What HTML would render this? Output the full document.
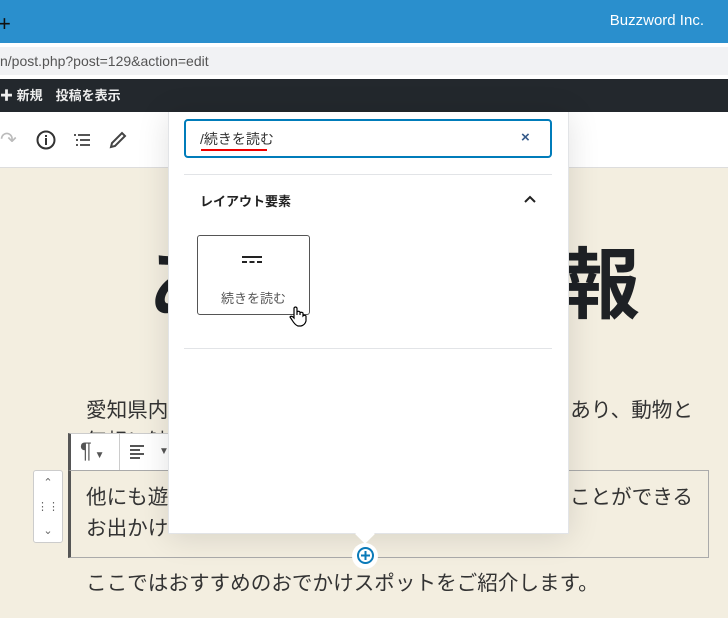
<!DOCTYPE html>
<html><head><meta charset="utf-8"><style>
*{margin:0;padding:0;box-sizing:border-box}
body{width:728px;height:618px;overflow:hidden;position:relative;background:#f3eee0;font-family:"Liberation Sans","Noto Sans CJK JP",sans-serif;color:#333}
.a{position:absolute}
.t{font-size:20.6px;line-height:31px;white-space:nowrap}
</style></head><body>
<div class="a" style="left:0;top:0;width:728px;height:43px;background:#2a8fcd"></div>
<div class="a" style="left:-2px;top:13px;color:#111;font-size:22px;line-height:22px">+</div>
<div class="a" style="right:24px;top:12px;color:#fff;font-size:15px">Buzzword Inc.</div>
<div class="a" style="left:0;top:43px;width:728px;height:4px;background:#fff"></div>
<div class="a" style="left:0;top:47px;width:728px;height:28px;background:#f1f2f4;font-size:14px;color:#555;line-height:28px;padding-left:0">n/post.php?post=129&amp;action=edit</div>
<div class="a" style="left:0;top:75px;width:728px;height:4px;background:#fff"></div>
<div class="a" style="left:0;top:79px;width:728px;height:33px;background:#23282d;color:#eee;font-size:13px;line-height:33px;font-weight:bold">✚ 新規　投稿を表示</div>
<div class="a" style="left:0;top:112px;width:728px;height:56px;background:#fff;border-bottom:1px solid #ddd"></div>
<div class="a" style="left:0;top:127px;color:#bbb;font-size:20px">↷</div>
<svg class="a" style="left:36px;top:130px" width="20" height="20"><circle cx="10" cy="10" r="8.5" fill="none" stroke="#333" stroke-width="2"/><rect x="9" y="8" width="2" height="7" fill="#333"/><rect x="9" y="5" width="2" height="2" fill="#333"/></svg>
<svg class="a" style="left:73px;top:132px" width="18" height="16"><g fill="#555"><rect x="1" y="2" width="2" height="2"/><rect x="5" y="2" width="12" height="2"/><rect x="3" y="7" width="2" height="2"/><rect x="7" y="7" width="10" height="2"/><rect x="3" y="12" width="2" height="2"/><rect x="7" y="12" width="10" height="2"/></g></svg>
<svg class="a" style="left:108px;top:130px" width="20" height="20"><path d="M3 17 L4 13 L14 3 L17 6 L7 16 Z" fill="none" stroke="#444" stroke-width="2"/></svg>
<div class="a" style="left:148px;top:230px;font-size:80px;font-weight:bold;color:#1e2125;line-height:110px">あ</div>
<div class="a" style="left:562px;top:230px;font-size:78px;font-weight:bold;color:#1e2125;line-height:110px">報</div>
<div class="a t" style="left:86px;top:395px">愛知県内<br>気軽に触</div>
<div class="a t" style="right:35px;top:395px">あり、動物と</div>
<div class="a" style="left:68px;top:433px;width:110px;height:38px;background:#fff;border:1px solid #ccc;border-left:3px solid #555"></div>
<div class="a" style="left:119px;top:434px;width:1px;height:36px;background:#ccc"></div>
<div class="a" style="left:80px;top:438px;font-size:22px;color:#555">¶<span style="font-size:10px"> ▼</span></div>
<svg class="a" style="left:130px;top:444px" width="16" height="16"><g fill="#555"><rect y="1" width="14" height="2"/><rect y="5" width="10" height="2"/><rect y="9" width="14" height="2"/><rect y="13" width="10" height="2"/></g></svg>
<div class="a" style="left:159px;top:446px;font-size:10px;color:#555">▼</div>
<div class="a" style="left:68px;top:470px;width:641px;height:88px;border:1px solid #aaa;border-left:3px solid #555"></div>
<div class="a t" style="left:86px;top:482px">他にも遊<br>お出かけ</div>
<div class="a t" style="right:35px;top:482px">ことができる</div>
<div class="a" style="left:33px;top:470px;width:30px;height:73px;background:#fff;border:1px solid #ccc;border-radius:3px;font-size:11px;color:#666;text-align:center;line-height:24px">⌃<br>⋮⋮<br>⌄</div>
<div class="a t" style="left:86px;top:568px">ここではおすすめのおでかけスポットをご紹介します。</div>
<div class="a" style="left:168px;top:112px;width:401px;height:422px;background:#fff;box-shadow:0 3px 30px rgba(0,0,0,.12);border:1px solid #e2e4e7;border-top:none"></div>
<div class="a" style="left:358px;top:527px;width:14px;height:14px;background:#fff;transform:rotate(45deg)"></div>
<div class="a" style="left:352px;top:543px;width:26px;height:26px;border-radius:50%;background:#fff"></div>
<svg class="a" style="left:356px;top:546px" width="19" height="19"><circle cx="9.5" cy="9.5" r="7.5" fill="none" stroke="#0a7ab8" stroke-width="2"/><rect x="8.5" y="5" width="2" height="9" fill="#0a7ab8"/><rect x="5" y="8.5" width="9" height="2" fill="#0a7ab8"/></svg>
<div class="a" style="left:184px;top:119px;width:368px;height:39px;border:2px solid #007cba;border-radius:4px"></div>
<div class="a" style="left:200px;top:129px;font-size:14px;color:#333">/続きを読む</div>
<div class="a" style="left:201px;top:149px;width:66px;height:2px;background:#e00"></div>
<div class="a" style="left:521px;top:129px;font-size:15px;color:#355a8a;font-weight:bold">×</div>
<div class="a" style="left:184px;top:174px;width:368px;height:1px;background:#e2e4e7"></div>
<div class="a" style="left:200px;top:191px;font-size:13px;font-weight:bold;color:#222">レイアウト要素</div>
<svg class="a" style="left:523px;top:194px" width="14" height="10"><path d="M2 8 L7 3 L12 8" fill="none" stroke="#222" stroke-width="2"/></svg>
<div class="a" style="left:197px;top:235px;width:113px;height:80px;border:1px solid #555;border-radius:3px"></div>
<svg class="a" style="left:242px;top:256px" width="22" height="8"><g fill="#222"><rect width="20" height="2"/><rect y="5" width="5" height="2"/><rect x="7.5" y="5" width="5" height="2"/><rect x="15" y="5" width="5" height="2"/></g></svg>
<div class="a" style="left:221px;top:288px;font-size:13px;color:#555">続きを読む</div>
<svg class="a" style="left:288px;top:305px" width="20" height="22"><path d="M6 13 L6 3 Q7.5 1 9 3 L9 10 L9 7 Q10.5 5.5 12 7 L12 10 L12 8 Q13.5 6.5 15 8 L15 11 Q16.5 9.5 18 11 L18 16 Q17 20 13 21 L10 21 Q7 20 4 15 L2 12 Q3 10.5 5 12 Z" fill="#fff" stroke="#000" stroke-width="1.2"/></svg>
<div class="a" style="left:184px;top:348px;width:368px;height:1px;background:#e2e4e7"></div>
</body></html>
